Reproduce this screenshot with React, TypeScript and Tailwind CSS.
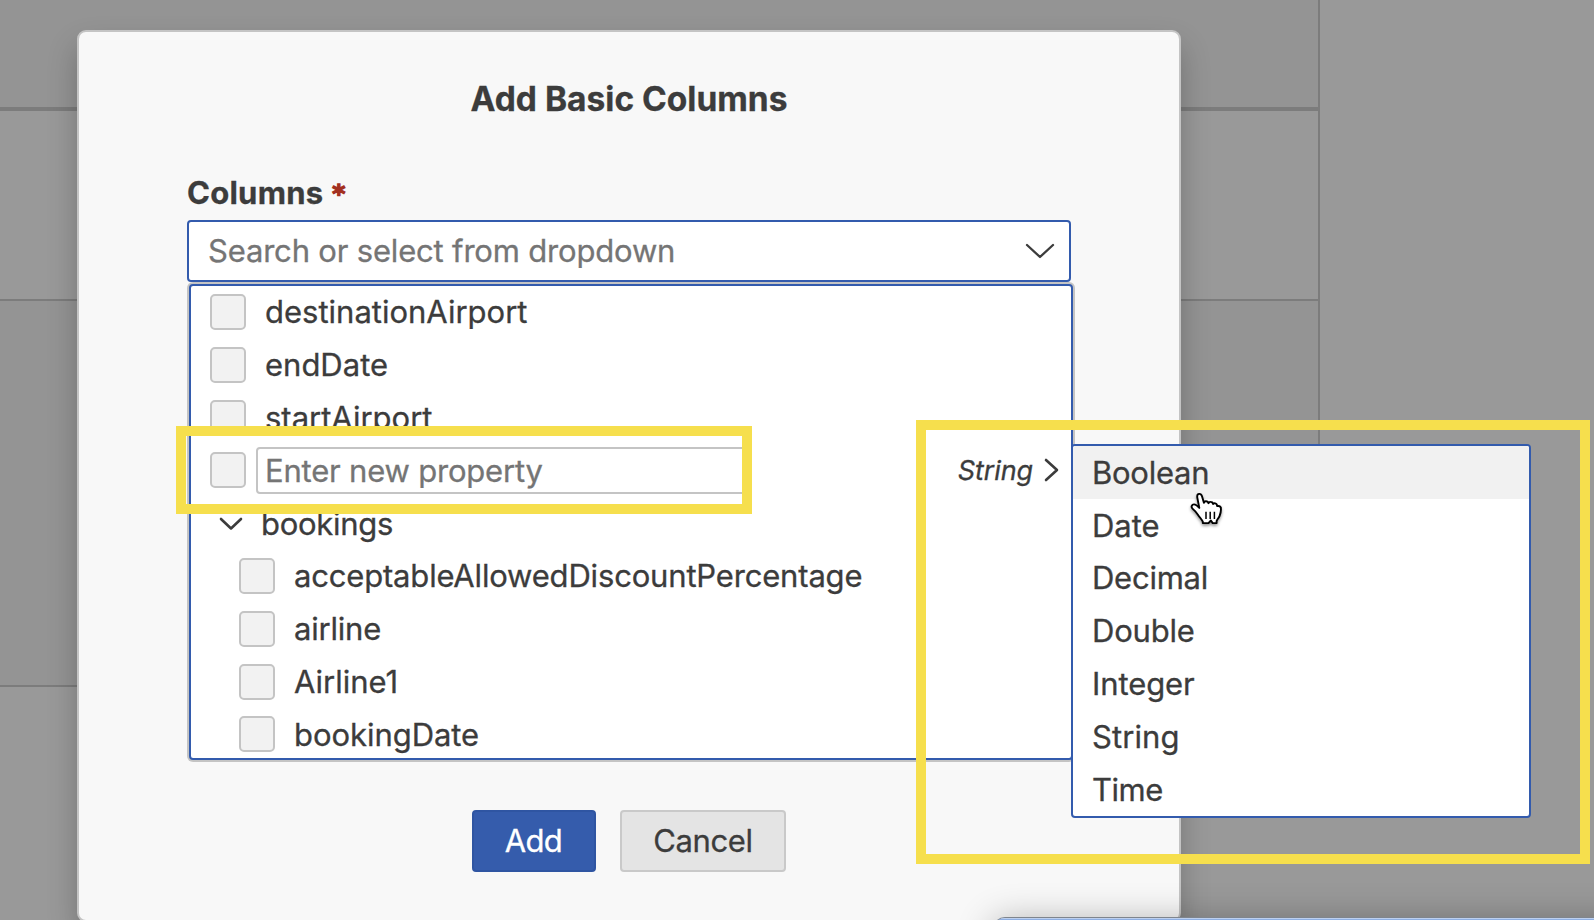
type Item = { label: string; tracking: string };

const topItems: Item[] = [
  { label: "destinationAirport", tracking: "tracking-normal" },
  { label: "endDate", tracking: "tracking-normal" },
  { label: "startAirport", tracking: "tracking-normal" },
];

const bookingItems: Item[] = [
  { label: "acceptableAllowedDiscountPercentage", tracking: "tracking-[-0.175px]" },
  { label: "airline", tracking: "tracking-[-0.2px]" },
  { label: "Airline1", tracking: "tracking-normal" },
  { label: "bookingDate", tracking: "tracking-[-0.05px] pt-px" },
];

const types: Item[] = [
  { label: "Boolean", tracking: "tracking-[-0.25px]" },
  { label: "Date", tracking: "tracking-normal" },
  { label: "Decimal", tracking: "tracking-[-0.25px]" },
  { label: "Double", tracking: "tracking-[-0.2px]" },
  { label: "Integer", tracking: "tracking-[-0.1px]" },
  { label: "String", tracking: "tracking-[0.1px]" },
  { label: "Time", tracking: "tracking-[-0.5px]" },
];

function Checkbox() {
  return <span className="block size-9 shrink-0 rounded-[5px] border-2 border-[#c4c4c4] bg-[#f2f2f2]" />;
}

function Row({ item, nested }: { item: Item; nested?: boolean }) {
  return (
    <li className={`flex h-[52.8px] shrink-0 items-center ${nested ? "pl-12" : "pl-[19px]"}`}>
      <Checkbox />
      <span className={`ml-[19px] ${item.tracking}`}>{item.label}</span>
    </li>
  );
}

function Chevron({ className, d, box, width }: { className: string; d: string; box: string; width: number }) {
  return (
    <svg className={className} viewBox={box} fill="none" stroke="currentColor" strokeWidth={width} strokeLinecap="round" strokeLinejoin="round">
      <path d={d} />
    </svg>
  );
}

function PageGrid() {
  return (
    <div className="flex h-full w-full">
      <div className="flex w-[1320px] flex-col">
        <div className="h-[111px] border-r-2 border-b-4 border-[#7c7c7c] bg-[#949494]" />
        <div className="h-[190px] border-r-2 border-b-2 border-[#7c7c7c] bg-[#999999]" />
        <div className="h-[386px] border-r-2 border-b-2 border-[#7c7c7c] bg-[#949494]" />
      </div>
    </div>
  );
}

function TypeMenu() {
  return (
    <ul className="absolute top-[444px] left-[1071px] flex h-[374px] w-[460px] flex-col overflow-hidden rounded-[4px] border-2 border-[#335bad] bg-white">
      {types.map((t, i) => (
        <li key={t.label} className={`flex h-[52.9px] shrink-0 items-center pl-[19px] ${i === 0 ? "bg-[#f1f1f1]" : ""} ${t.tracking}`}>
          <span className={i < 2 ? "pt-[2px]" : ""}>{t.label}</span>
        </li>
      ))}
    </ul>
  );
}

function HandCursor() {
  return (
    <svg className="absolute top-[491px] left-[1188px] h-[42px] w-[38px] drop-shadow-[0_2px_1.5px_rgba(0,0,0,0.4)]" viewBox="0 0 38 42" fill="none">
      <path
        d="M14.8 32v-1.4c-1-2-3.2-4.4-4.7-6.7-1.6-2.5-2.7-3.8-5.6-6.3-1.8-1.6-.7-4.3 1.6-4.2 1.9.1 3.4 1.6 5.2 3.5L9.3 6.6c-.4-3 .7-3.6 1.9-3.7 1.5-.1 2.3.7 2.8 2.4l1.9 6.5c.2-1.2 1-1.6 2-1.6 1.5 0 2.3.8 2.6 2 .3-1 1.2-1.4 2.2-1.3 1.4.1 2.2 1 2.4 2.2.4-.7 1.2-.9 2.1-.7 1.4.3 1.9 1.3 1.9 2.7 1.3-.2 3.4-.1 3.7 1.7.4 2-.2 5.3-1.2 8-.9 2.3-2.5 3.6-3 5.2v2l-3.9.1-1.8-2.6-2.4 2.6-5.7-.1z"
        fill="white"
        stroke="black"
        strokeWidth="1.9"
        strokeLinejoin="round"
      />
      <path d="M18 20.7v7.3M22.2 20.7v7.3M26.4 20.7v7.3" stroke="black" strokeWidth="1.5" />
    </svg>
  );
}

export default function App() {
  return (
    <div className="relative h-[920px] w-[1594px] overflow-hidden bg-[#999999] font-['Inter','Liberation_Sans',sans-serif] text-[31px] leading-[38px] text-[#3c3c3c] [-webkit-text-stroke-width:0.3px]">
      <PageGrid />

      <section className="absolute top-[30px] left-[77px] flex h-[892px] w-[1104px] flex-col rounded-[9px] border-2 border-[#c4c4c4] bg-[#f8f8f8] px-[108px] shadow-[0_16px_30px_rgba(0,0,0,0.24)]">
        <h1 className="mt-[46px] text-center text-[33.5px] leading-[42px] font-bold">Add Basic Columns</h1>
        <label className="mt-[53px] flex h-10 text-[31px] leading-10 font-bold tracking-[0.25px]">
          Columns
          <span className="ml-[9px] font-['DejaVu_Sans'] text-[25px] leading-[42px] text-[#a3301f] [-webkit-text-stroke-width:1.4px]">*</span>
        </label>
        <div className="mt-[7px] flex h-[62px] w-[884px] shrink-0 items-center justify-between rounded-[4px] border-2 border-[#335bad] bg-white pr-[14px] pl-[19px]">
          <span className="tracking-[-0.18px] text-[#757575]">Search or select from dropdown</span>
          <Chevron className="h-[18px] w-[30px]" box="0 0 30 18" d="M2 3l13 12L28 3" width={2.3} />
        </div>

        <ul className="mt-[2px] ml-[2px] flex h-[476px] w-[884px] shrink-0 flex-col overflow-hidden rounded-[4px] border-2 border-[#335bad] bg-white shadow-[0_0_0_2px_#c4c4c4]">
          <li className="-mt-[0.4px]">
            <ul>
              {topItems.map((item) => (
                <Row key={item.label} item={item} />
              ))}
            </ul>
          </li>
          <li className="flex h-[52.8px] shrink-0 items-center pr-[11px] pl-[19px]">
            <Checkbox />
            <span className="ml-[10px] flex h-[47px] w-[492px] items-center rounded-[4px] border-2 border-[#c4c4c4] bg-white pt-[2px] pl-[7px] tracking-[-0.2px] text-[#757575]">
              Enter new property
            </span>
            <span className="ml-auto pt-[2px] text-[27px] leading-8 tracking-[-0.1px] italic">String</span>
            <Chevron className="ml-[10px] h-[26px] w-[17px]" box="0 0 17 26" d="M3 3l11 10L3 23" width={2.6} />
          </li>
          <li className="flex h-[52.8px] shrink-0 items-center pl-[27px]">
            <Chevron className="h-[15px] w-[26px]" box="0 0 26 15" d="M3 3l10 9.5L23 3" width={2.6} />
            <span className="ml-[17px] pt-[2px] tracking-[-0.3px]">bookings</span>
          </li>
          {bookingItems.map((item) => (
            <Row key={item.label} item={item} nested />
          ))}
        </ul>

        <div className="mt-[50px] ml-[285px] flex gap-6">
          <button className="h-[62px] w-[124px] rounded-[4px] border-2 border-[#2f55a2] bg-[#355cac] pr-px tracking-[-0.7px] text-white">Add</button>
          <button className="h-[62px] w-[166px] rounded-[4px] border-2 border-[#c9c9c9] bg-[#e4e4e4] tracking-[-0.4px]">Cancel</button>
        </div>
      </section>

      <div className="absolute top-[917px] left-[993px] h-10 w-[700px] overflow-hidden rounded-tl-[12px] border-t border-[#7f858d] bg-[#8fb0e4] shadow-[0_4px_36px_rgba(0,0,0,0.3)]">
        <div className="h-px bg-[#bdd0ef]" />
      </div>

      <TypeMenu />
      <HandCursor />
      <div className="absolute top-[426px] left-[176px] h-[88px] w-[576px] border-10 border-[#f6df4d]" />
      <div className="absolute top-[420px] left-[916px] h-[444px] w-[674px] border-10 border-[#f6df4d]" />
    </div>
  );
}
